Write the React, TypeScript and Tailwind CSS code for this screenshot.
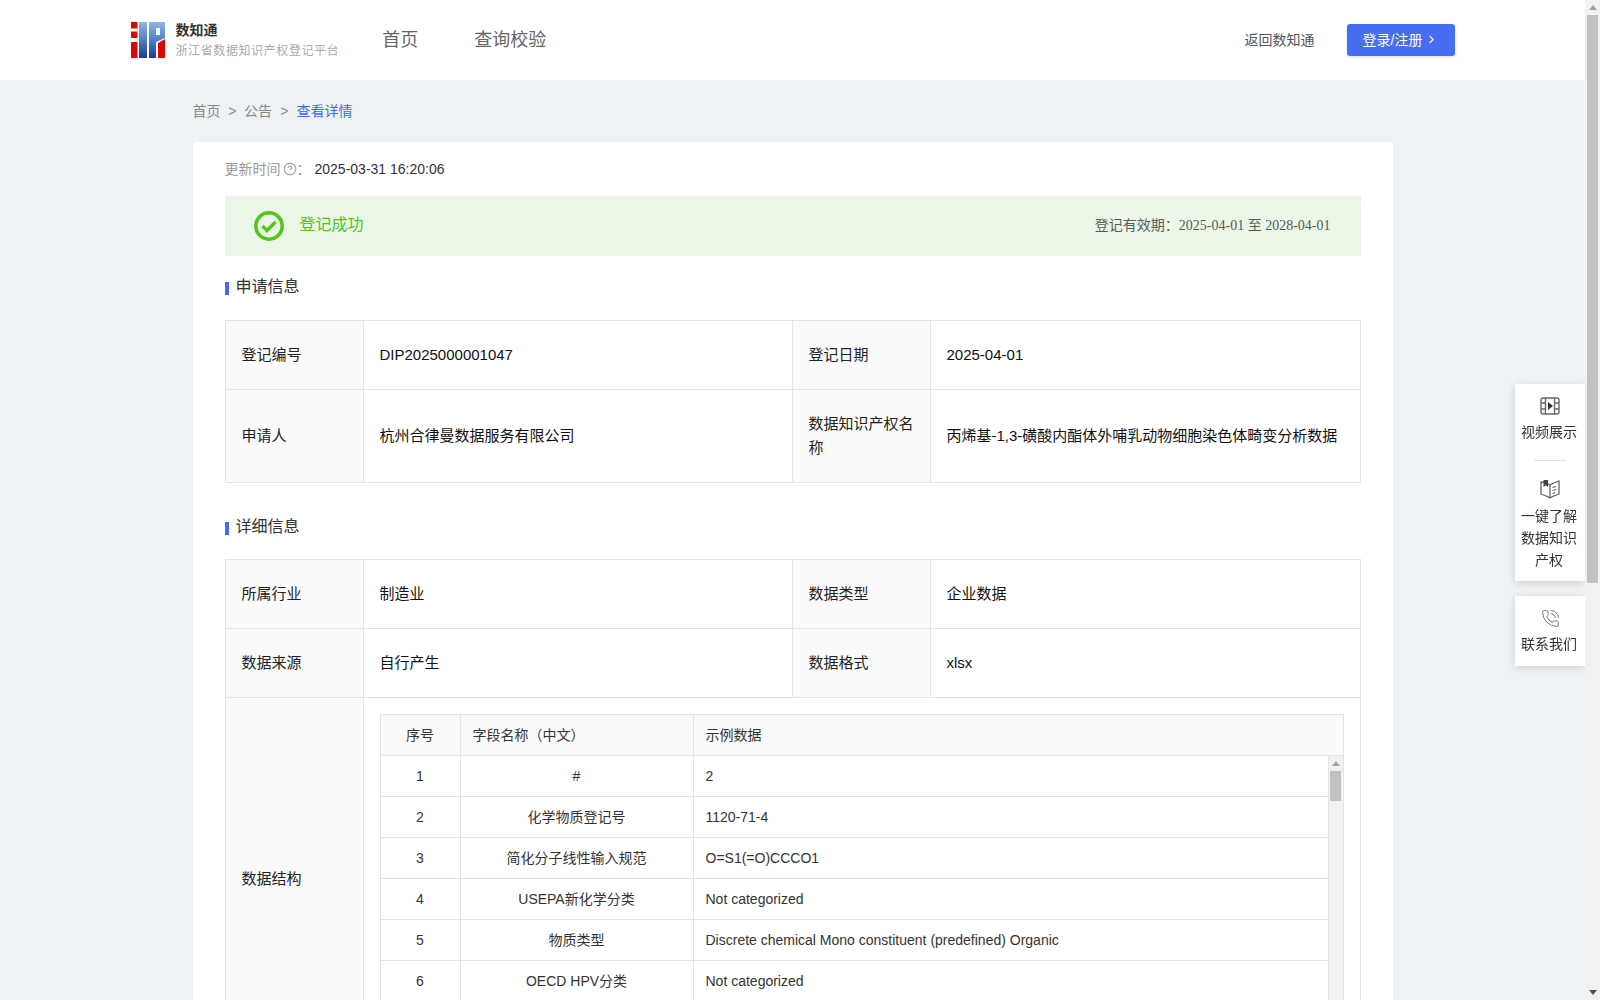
import { ChevronRight, CircleHelp, PhoneCall } from "lucide-react";

const fieldRows = [
    { no: 1, name: "#", sample: "2" },
    { no: 2, name: "化学物质登记号", sample: "1120-71-4" },
    { no: 3, name: "简化分子线性输入规范", sample: "O=S1(=O)CCCO1" },
    { no: 4, name: "USEPA新化学分类", sample: "Not categorized" },
    { no: 5, name: "物质类型", sample: "Discrete chemical Mono constituent (predefined) Organic" },
    { no: 6, name: "OECD HPV分类", sample: "Not categorized" },
];

function Logo() {
    return (
        <svg width="34" height="36" viewBox="0 0 34 36" className="shrink-0">
            <defs>
                <linearGradient id="logoBlue" x1="0" y1="0" x2="0" y2="1">
                    <stop offset="0" stopColor="#8db5e6" />
                    <stop offset="0.5" stopColor="#4f7fc8" />
                    <stop offset="1" stopColor="#1f3a88" />
                </linearGradient>
            </defs>
            <rect x="0" y="0" width="6.5" height="36" fill="#d60a0a" />
            <rect x="0" y="6.5" width="6.5" height="3" fill="#fff" />
            <rect x="0" y="16" width="6.5" height="4" fill="#fff" />
            <rect x="8" y="0" width="8" height="36" fill="url(#logoBlue)" />
            <path d="M18 0H34V16L25 20V36H18Z" fill="url(#logoBlue)" />
            <rect x="25" y="6" width="4" height="7" fill="#fff" />
            <path d="M27 21L34 17V36H27Z" fill="#d60a0a" />
        </svg>
    );
}

function SectionTitle({ text, className }: { text: string; className: string }) {
    return (
        <div className={`flex h-6 items-center text-base text-[#333] ${className}`}>
            <span className="mr-[7px] mt-[2px] h-[13px] w-1 bg-[#4569f0]" />
            {text}
        </div>
    );
}

function Label({ children }: { children: React.ReactNode }) {
    return <td className="border border-[#e4e4e4] bg-[#fafafa] px-4 text-[15px] leading-6 text-[#222]">{children}</td>;
}

function Value({ children }: { children: React.ReactNode }) {
    return <td className="border border-[#e4e4e4] px-4 text-[15px] leading-6 text-[#111]">{children}</td>;
}

function InfoCols() {
    return (
        <colgroup>
            <col className="w-[138px]" />
            <col className="w-[429px]" />
            <col className="w-[138px]" />
            <col className="w-[430px]" />
        </colgroup>
    );
}

function ArrowUp({ color }: { color: string }) {
    return (
        <svg width="8" height="5" viewBox="0 0 8 5">
            <path d="M4 0L8 5H0Z" fill={color} />
        </svg>
    );
}

function ArrowDown({ color }: { color: string }) {
    return (
        <svg width="8" height="5" viewBox="0 0 8 5">
            <path d="M0 0H8L4 5Z" fill={color} />
        </svg>
    );
}

function FieldTable() {
    return (
        <div className="border-l border-r border-t border-[#e4e4e4] text-[#333]">
            <div className="flex h-[41px] items-center border-b border-[#e4e4e4] bg-[#fafafa] pb-px">
                <div className="flex h-full w-[80px] items-center justify-center border-r border-[#e4e4e4]">序号</div>
                <div className="flex h-full w-[233px] items-center border-r border-[#e4e4e4] px-3">字段名称（中文）</div>
                <div className="px-3">示例数据</div>
            </div>
            <div className="flex h-[288px]">
                <div className="min-w-0 flex-1 overflow-hidden border-r border-[#e4e4e4]">
                    {fieldRows.map((row) => (
                        <div key={row.no} className="flex h-[41px] items-center border-b border-[#e4e4e4]">
                            <div className="flex h-full w-[80px] items-center justify-center border-r border-[#e4e4e4]">{row.no}</div>
                            <div className="flex h-full w-[233px] items-center justify-center border-r border-[#e4e4e4]">{row.name}</div>
                            <div className="px-3">{row.sample}</div>
                        </div>
                    ))}
                </div>
                {/* table's own scrollbar */}
                <div className="flex w-[14px] flex-col items-center bg-[#f1f1f1]">
                    <div className="flex h-[15px] items-center justify-center">
                        <ArrowUp color="#a3a3a3" />
                    </div>
                    <div className="h-[30px] w-[11px] bg-[#c1c1c1]" />
                </div>
            </div>
        </div>
    );
}

function PageScrollbar() {
    return (
        <div className="fixed bottom-0 right-0 top-0 flex w-[15px] flex-col items-center bg-[#f1f1f1]">
            <div className="flex h-[15px] items-center justify-center">
                <ArrowUp color="#a3a3a3" />
            </div>
            <div className="h-[568px] w-[11px] bg-[#c1c1c1]" />
            <div className="mt-auto flex h-[15px] items-center justify-center">
                <ArrowDown color="#505050" />
            </div>
        </div>
    );
}

function SideTools() {
    return (
        <div className="fixed right-[15px] top-[384px] flex w-[70px] flex-col gap-[15px] text-center text-sm text-[#333]">
            <div className="bg-white pt-[13px] pb-[10px] shadow-[0_2px_8px_rgba(0,0,0,0.14)]">
                <svg width="20" height="18" viewBox="0 0 20 18" fill="none" stroke="#666" strokeWidth="1.4" className="mx-auto">
                    <rect x="1" y="1" width="18" height="16" rx="2" />
                    <path d="M5.5 1V17M14.5 1V17M1 6H5.5M1 12H5.5M14.5 6H19M14.5 12H19" />
                    <path d="M8 5L13 9L8 13Z" fill="#333" stroke="none" />
                </svg>
                <div className="mt-[6px] pr-[2px] leading-[22px]">视频展示</div>
                <div className="mx-auto mb-[18px] mt-[17px] h-px w-8 bg-[#e4e4e4]" />
                <svg width="20" height="20" viewBox="0 0 20 20" fill="none" stroke="#666" strokeWidth="1.3" className="mx-auto">
                    <path d="M1 3C4 3 7 4 10 6C13 4 16 3 19 2V15C16 16 13 17 10 19C7 17 4 16 1 15Z" />
                    <path d="M10 6V19" />
                    <path d="M3.5 1H8V8L5.7 6.2L3.5 8Z" fill="#444" stroke="none" />
                    <path d="M12.5 8.5L16 7.5M12.5 11.5L16 10.5M12.5 14.5L15 13.7" />
                </svg>
                <div className="mt-[6px] pl-[3px] pr-[5px] leading-[22px]">一键了解数据知识产权</div>
            </div>
            <div className="bg-white pt-[13px] pb-[11px] shadow-[0_2px_8px_rgba(0,0,0,0.14)]">
                <PhoneCall size={19} strokeWidth={1.1} color="#666" className="mx-auto" />
                <div className="mt-[5px] pr-[2px] leading-[22px]">联系我们</div>
            </div>
        </div>
    );
}

export default function App() {
    return (
        <div className="bg-[#eef2f5] pr-[15px] text-sm font-['Liberation_Sans','Noto_Sans_CJK_SC',sans-serif]">
            {/* ── HEADER ─────────────────────────────────────────────────── */}
            <header className="h-20 bg-white">
                <div className="mx-auto flex h-full w-[1324px] items-center">
                    <Logo />
                    <div className="ml-[11px]">
                        <div className="font-bold leading-5 text-[#333]">数知通</div>
                        <div className="mt-[1px] text-xs leading-5 tracking-[0.6px] text-[#aaa]">浙江省数据知识产权登记平台</div>
                    </div>
                    <nav className="ml-[43px] flex gap-[56px] text-lg text-[#666]">
                        <span>首页</span>
                        <span>查询校验</span>
                    </nav>
                    <span className="-mt-px ml-auto text-[#555]">返回数知通</span>
                    <button className="ml-[32px] flex h-8 w-[108px] items-center justify-center gap-[3px] rounded-[3px] bg-[#466df2] pb-px text-white shadow-[0_1px_3px_rgba(0,0,0,0.12)]">
                        登录/注册
                        <ChevronRight size={13} strokeWidth={2} />
                    </button>
                </div>
            </header>

            <main className="mx-auto w-[1200px] pb-8 pt-5">
                {/* ── BREADCRUMB ─────────────────────────────────────────── */}
                <div className="flex h-[22px] items-center text-[#888]">
                    <span>首页</span>
                    <span className="w-[23.5px] text-center">&gt;</span>
                    <span>公告</span>
                    <span className="w-[24.5px] text-center">&gt;</span>
                    <span className="text-[#3b6cf0]">查看详情</span>
                </div>

                {/* ── DETAIL CARD ────────────────────────────────────────── */}
                <div className="mt-5 rounded bg-white px-8 pb-8 pt-4">
                    <div className="flex h-[22px] items-center">
                        <span className="text-[#999]">更新时间</span>
                        <CircleHelp size={14} strokeWidth={1.8} color="#999" className="ml-[2px]" />
                        <span className="w-[18px] text-[#999]">：</span>
                        <span className="text-[#333]">2025-03-31 16:20:06</span>
                    </div>

                    <div className="mt-4 flex h-[60px] items-center bg-[#eaf7e6] pl-[29px] pr-[30px]">
                        <svg width="30" height="30" viewBox="0 0 30 30" fill="none" stroke="#52c41a" className="shrink-0">
                            <circle cx="15" cy="15" r="13.2" strokeWidth="3.6" />
                            <path d="M8.5 15L13 19.5L21.5 11" strokeWidth="3.4" />
                        </svg>
                        <span className="-mt-[2px] ml-[16px] text-base text-[#52c41a]">登记成功</span>
                        <span className="-mt-[2px] ml-auto text-[#595959]">
                            登记有效期：<span className="font-['Liberation_Serif','Noto_Sans_CJK_SC',serif]">2025-04-01 至 2028-04-01</span>
                        </span>
                    </div>

                    <SectionTitle text="申请信息" className="mt-[19px]" />
                    <table className="mt-[21px] w-[1135px] table-fixed border-collapse">
                        <InfoCols />
                        <tbody>
                            <tr className="h-[69px]">
                                <Label>登记编号</Label>
                                <Value>DIP2025000001047</Value>
                                <Label>登记日期</Label>
                                <Value>2025-04-01</Value>
                            </tr>
                            <tr className="h-[93px]">
                                <Label>申请人</Label>
                                <Value>杭州合律曼数据服务有限公司</Value>
                                <Label>数据知识产权名称</Label>
                                <Value>丙烯基-1,3-磺酸内酯体外哺乳动物细胞染色体畸变分析数据</Value>
                            </tr>
                        </tbody>
                    </table>

                    <SectionTitle text="详细信息" className="mt-[32px]" />
                    <table className="mt-[20px] w-[1135px] table-fixed border-collapse">
                        <InfoCols />
                        <tbody>
                            <tr className="h-[69px]">
                                <Label>所属行业</Label>
                                <Value>制造业</Value>
                                <Label>数据类型</Label>
                                <Value>企业数据</Value>
                            </tr>
                            <tr className="h-[69px]">
                                <Label>数据来源</Label>
                                <Value>自行产生</Value>
                                <Label>数据格式</Label>
                                <Value>xlsx</Value>
                            </tr>
                            <tr>
                                <Label>数据结构</Label>
                                <td colSpan={3} className="border border-[#e4e4e4] p-4">
                                    <FieldTable />
                                </td>
                            </tr>
                        </tbody>
                    </table>
                </div>
            </main>

            <SideTools />
            <PageScrollbar />
        </div>
    );
}
